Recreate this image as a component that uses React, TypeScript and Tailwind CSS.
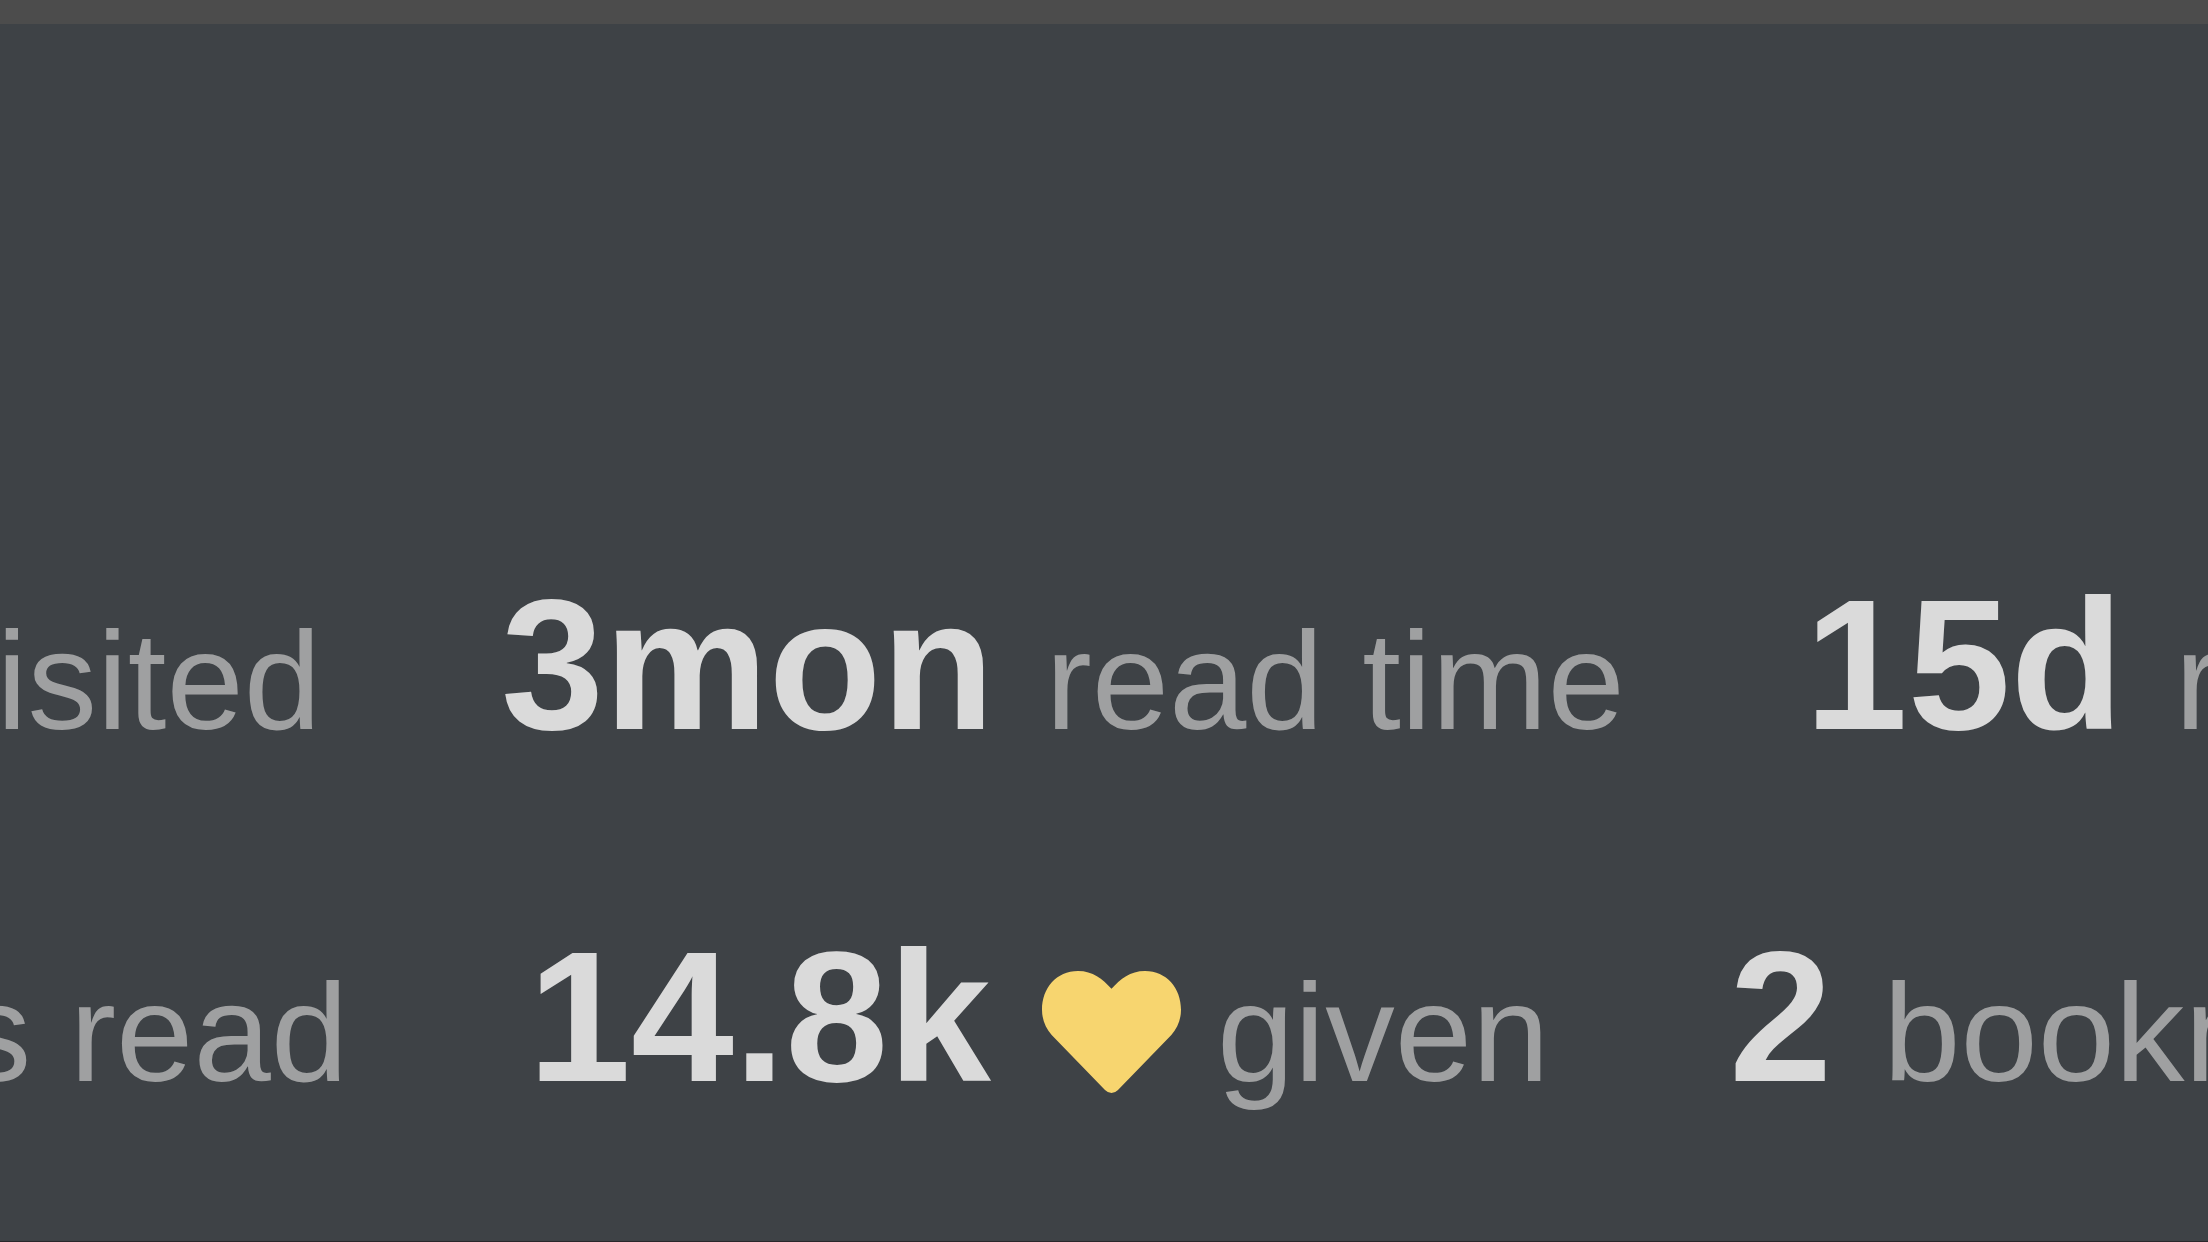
import type { ReactNode } from "react";

function HeartIcon() {
  return (
    <svg
      viewBox="69 66 417 366"
      className="mr-[36px] inline-block h-[122px] w-[139px] align-[-12px] fill-[#f7d56f]"
      role="img"
      aria-label="likes"
    >
      <path d="M277.5 119C250 90 222 66 177 66C112 66 69 118 69 182C69 212 80 238 98 258L258 423Q267 432 277.5 432Q288 432 297 423L457 258C475 238 486 212 486 182C486 118 443 66 378 66C333 66 305 90 277.5 119Z" />
    </svg>
  );
}

function Stat({ value, children }: { value: string; children: ReactNode }) {
  return (
    <li className="flex shrink-0 items-baseline gap-[51px]">
      <span className="text-[185px] font-bold text-[#dadada]">{value}</span>
      <span>{children}</span>
    </li>
  );
}

export default function App() {
  return (
    <div className="flex min-h-screen flex-col overflow-hidden border-b border-[#29272b] bg-[#3e4246] font-['Liberation_Sans',Arial,sans-serif] text-[139px] leading-[212px] whitespace-nowrap text-[#9fa0a1]">
      <header className="h-6 bg-[#4c4c4c]" />
      <main className="flex flex-col gap-[124px] overflow-hidden pt-[535px]">
        <ul className="flex items-baseline gap-[180px]">
          <li className="flex w-[321px] shrink-0 justify-end">visited</li>
          <Stat value="3mon">read time</Stat>
          <Stat value="15d">recent read time</Stat>
        </ul>
        <ul className="flex items-baseline gap-[180px]">
          <li className="flex w-[348px] shrink-0 justify-end">posts read</li>
          <Stat value="14.8k">
            <HeartIcon />
            given
          </Stat>
          <Stat value="2">bookmarks</Stat>
        </ul>
      </main>
    </div>
  );
}
